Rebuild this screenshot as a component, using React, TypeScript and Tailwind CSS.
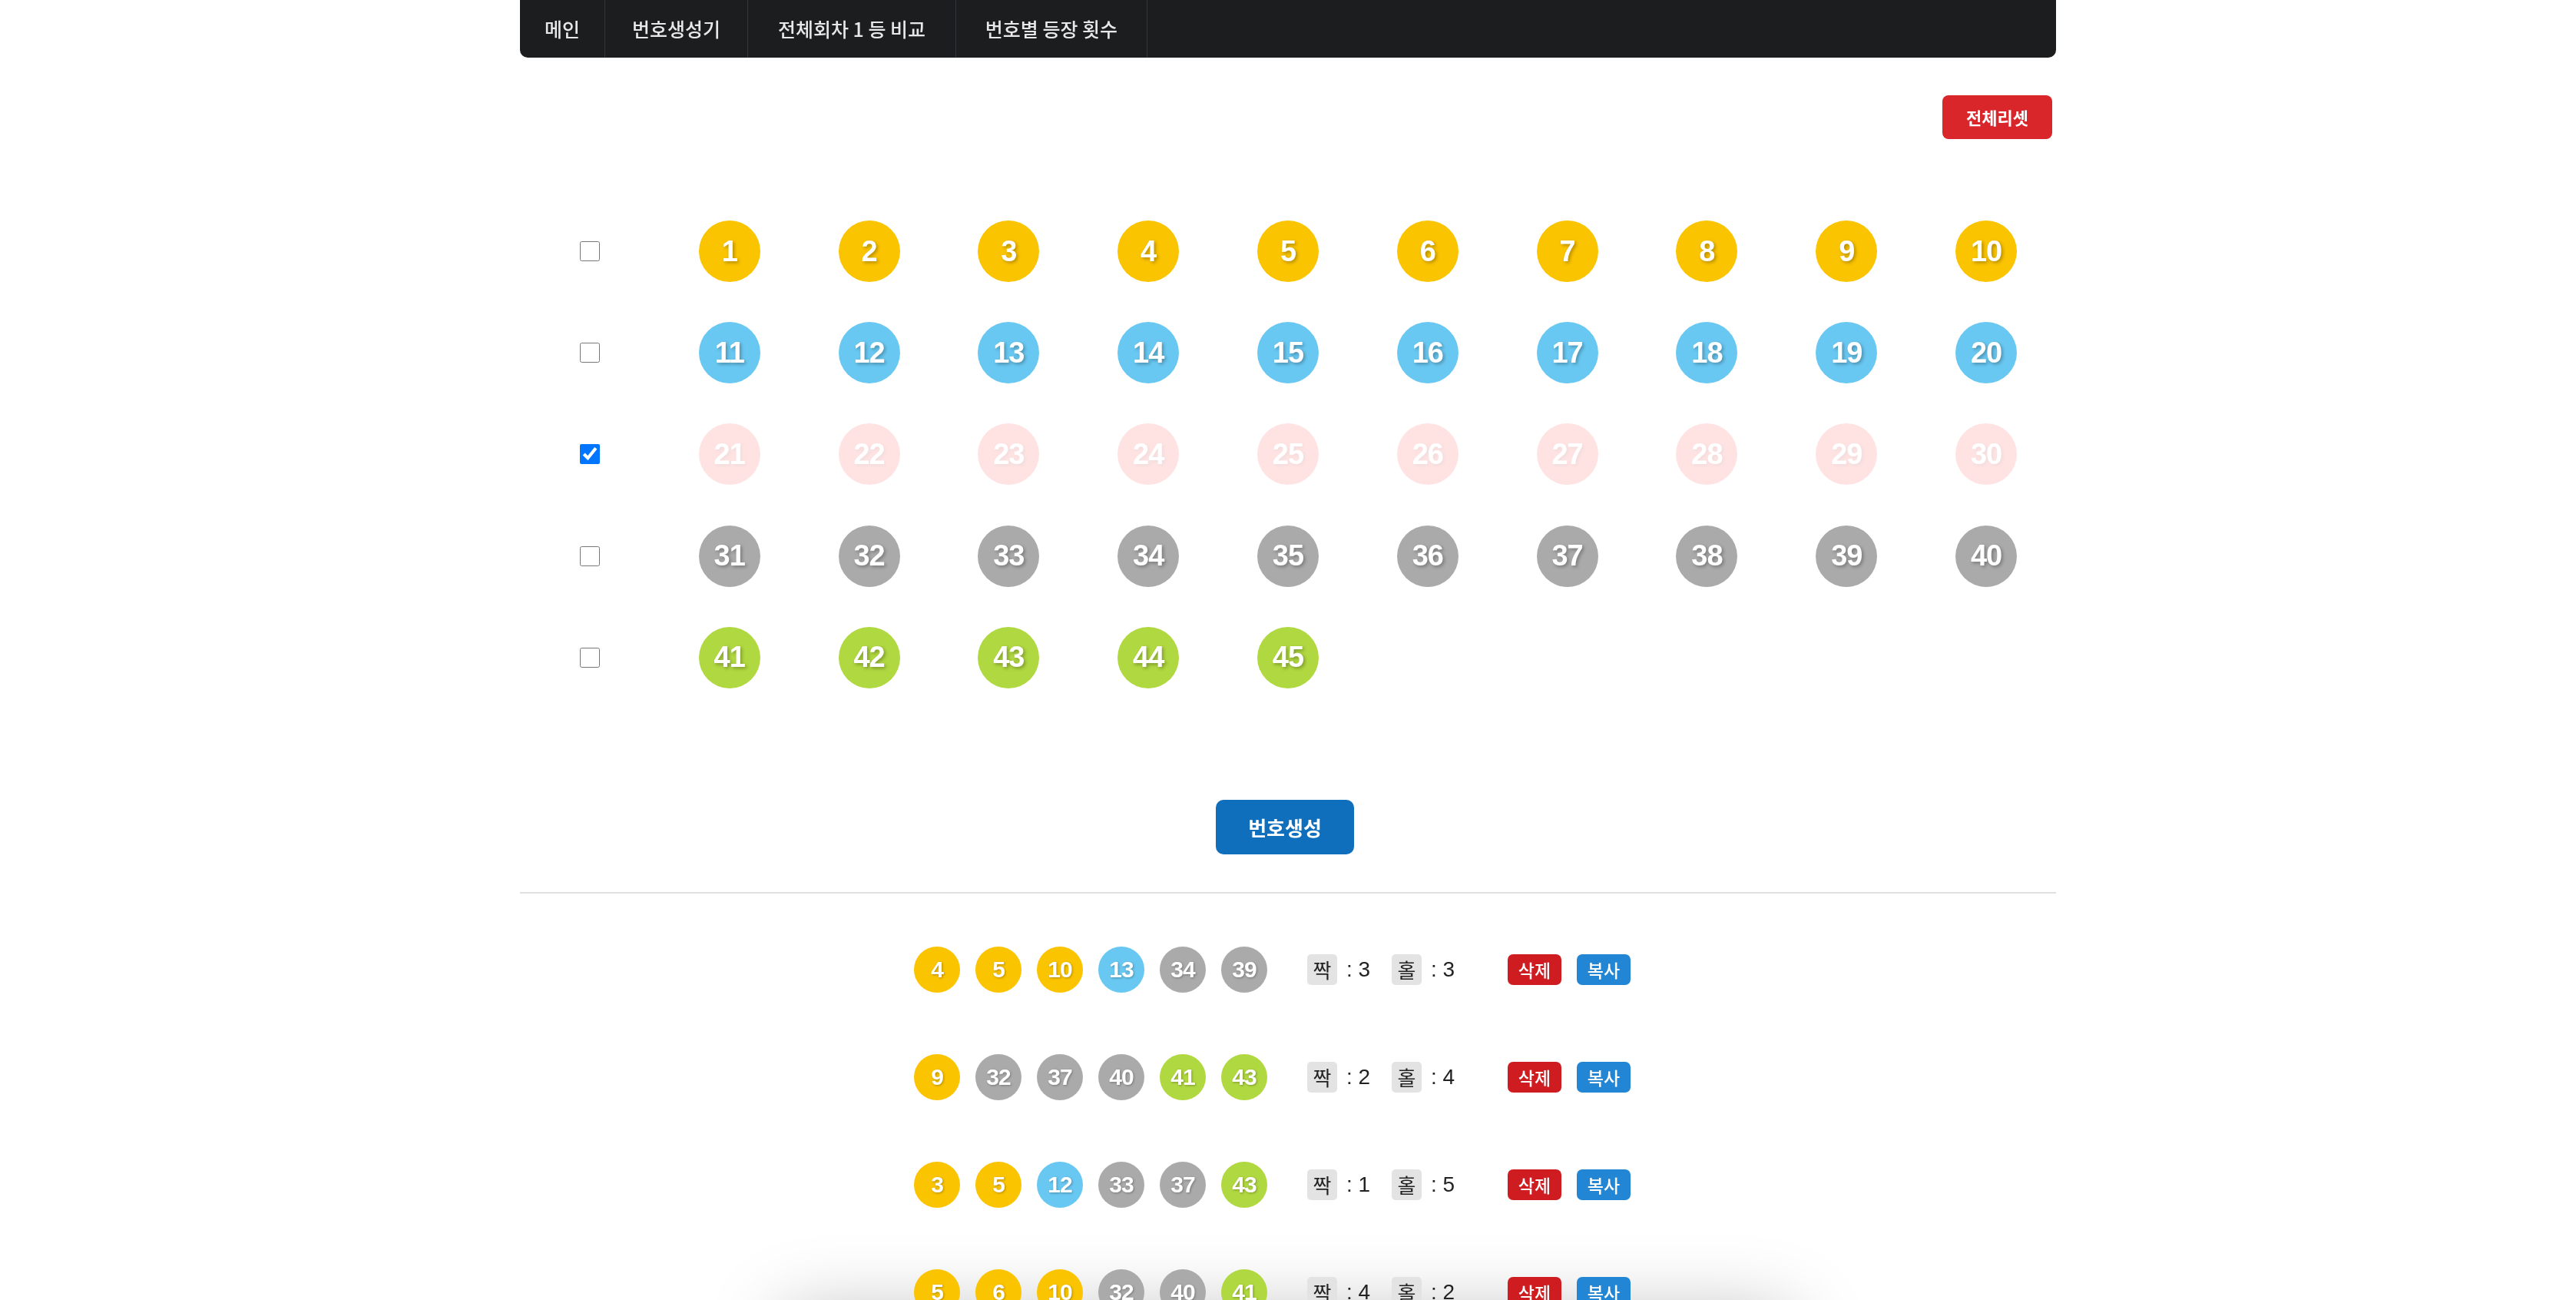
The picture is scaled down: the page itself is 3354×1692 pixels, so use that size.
import React from "react";

const navItems = [
  { label: "메인", w: "w-[111px]" },
  { label: "번호생성기", w: "w-[186px]" },
  { label: "전체회차 1 등 비교", w: "w-[271px]" },
  { label: "번호별 등장 횟수", w: "w-[249px]" },
];

function colorOf(n: number) {
  if (n <= 10) return "bg-[#fbc400]";
  if (n <= 20) return "bg-[#69c8f2]";
  if (n <= 30) return "bg-[#ff7272]";
  if (n <= 40) return "bg-[#aaaaaa]";
  return "bg-[#b0d840]";
}

function BigBall({ n, faded }: { n: number; faded?: boolean }) {
  return (
    <div
      className={`w-[80px] h-[80px] rounded-full flex items-center justify-center text-white font-bold text-[38px] font-['Liberation_Sans',Arial,sans-serif] tracking-[-1px] [text-shadow:2px_2px_4px_rgba(0,0,0,0.3)] ${colorOf(
        n
      )} ${faded ? "opacity-20" : ""}`}
    >
      {n}
    </div>
  );
}

function SmallBall({ n }: { n: number }) {
  return (
    <div
      className={`w-[60px] h-[60px] rounded-full flex items-center justify-center text-white font-bold text-[30px] font-['Liberation_Sans',Arial,sans-serif] tracking-[-1px] [text-shadow:1px_1px_3px_rgba(0,0,0,0.3)] ${colorOf(
        n
      )}`}
    >
      {n}
    </div>
  );
}

const rows: number[][] = [
  [1, 2, 3, 4, 5, 6, 7, 8, 9, 10],
  [11, 12, 13, 14, 15, 16, 17, 18, 19, 20],
  [21, 22, 23, 24, 25, 26, 27, 28, 29, 30],
  [31, 32, 33, 34, 35, 36, 37, 38, 39, 40],
  [41, 42, 43, 44, 45],
];

const results: { nums: number[]; even: number; odd: number }[] = [
  { nums: [4, 5, 10, 13, 34, 39], even: 3, odd: 3 },
  { nums: [9, 32, 37, 40, 41, 43], even: 2, odd: 4 },
  { nums: [3, 5, 12, 33, 37, 43], even: 1, odd: 5 },
  { nums: [5, 6, 10, 32, 40, 41], even: 4, odd: 2 },
];

export default function App() {
  return (
    <div className="h-screen overflow-hidden font-['Noto_Sans_CJK_KR',sans-serif]">
      <div className="fixed left-[1020px] top-[1712px] w-[1310px] h-[200px] -z-10 shadow-[0_0_100px_rgba(0,0,0,0.28)]" />
      <div className="w-[2000px] mx-auto">
        {/* Nav */}
        <nav className="h-[75px] bg-[#1c1d1f] rounded-b-[10px] flex">
          {navItems.map((it) => (
            <div
              key={it.label}
              className={`${it.w} h-full flex items-center justify-center text-[25px] font-medium text-[#e8e8e8] border-r border-[#333538]`}
            >
              {it.label}
            </div>
          ))}
        </nav>

        {/* Reset */}
        <div className="flex justify-end mt-[49px] pr-[5px]">
          <button className="w-[143px] h-[57px] rounded-[8px] bg-[#d9262b] text-white font-bold text-[22px]">
            전체리셋
          </button>
        </div>

        {/* Grid */}
        <div className="mt-[80px]">
          {rows.map((r, i) => (
            <div key={i} className="grid grid-cols-11 h-[132.2px] items-center">
              <div className="flex justify-center">
                <input
                  type="checkbox"
                  defaultChecked={i === 2}
                  className="w-[26px] h-[26px] m-0"
                />
              </div>
              {r.map((n) => (
                <div key={n} className="flex justify-center">
                  <BigBall n={n} faded={i === 2} />
                </div>
              ))}
            </div>
          ))}
        </div>

        {/* Generate */}
        <div className="flex justify-center mt-[119px] pr-[8px]">
          <button className="w-[180px] h-[71px] rounded-[10px] bg-[#0f6fbd] text-white font-bold text-[26px]">
            번호생성
          </button>
        </div>

        <div className="mt-[49px] h-[2px] bg-[#e0e0e0]" />

        {/* Results */}
        <div className="mt-[29px]">
          {results.map((res, i) => (
            <div key={i} className="h-[140px] flex items-center justify-center pr-[41px]">
              <div className="flex gap-[20px]">
                {res.nums.map((n) => (
                  <SmallBall key={n} n={n} />
                ))}
              </div>
              <div className="ml-[52px] flex items-center text-[28px] text-[#222] font-['Liberation_Sans','Noto_Sans_CJK_KR',sans-serif]">
                <span className="w-[39px] h-[40px] rounded-[5px] bg-[#e3e3e3] flex items-center justify-center text-[26px] font-['Noto_Sans_CJK_KR',sans-serif]">
                  짝
                </span>
                <span className="ml-[12px] w-[40px]">: {res.even}</span>
                <span className="ml-[19px] w-[39px] h-[40px] rounded-[5px] bg-[#e3e3e3] flex items-center justify-center text-[26px] font-['Noto_Sans_CJK_KR',sans-serif]">
                  홀
                </span>
                <span className="ml-[12px] w-[40px]">: {res.odd}</span>
              </div>
              <button className="ml-[60px] w-[70px] h-[40px] rounded-[7px] bg-[#cf1c21] text-white text-[23px] font-medium">
                삭제
              </button>
              <button className="ml-[20px] w-[70px] h-[40px] rounded-[7px] bg-[#2286d4] text-white text-[23px] font-medium">
                복사
              </button>
            </div>
          ))}
        </div>
      </div>
    </div>
  );
}
